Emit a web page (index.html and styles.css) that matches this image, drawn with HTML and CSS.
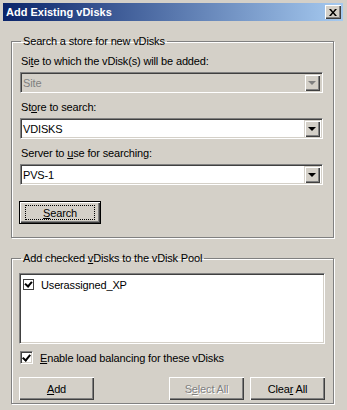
FILE: index.html
```html
<!DOCTYPE html>
<html>
<head>
<meta charset="utf-8">
<link rel="stylesheet" href="styles.css">
</head>
<body>
<div class="window">
  <div class="titlebar">
    <span class="title">Add Existing vDisks</span>
    <span class="close-btn">
      <svg width="8" height="7" viewBox="0 0 8 7"><path d="M0 0h2l2 2.5L6 0h2L5 3.5 8 7H6L4 4.5 2 7H0l3-3.5z" fill="#000"/></svg>
    </span>
  </div>
  <div class="content">
    <fieldset class="group group-search">
      <legend>Search a store for new vDisks</legend>
      <div class="lbl first">Si<u>t</u>e to which the vDisk(s) will be added:</div>
      <div class="combo disabled">
        <span class="val">Site</span>
        <span class="drop"><span class="tri"></span></span>
      </div>
      <div class="lbl">St<u>o</u>re to search:</div>
      <div class="combo">
        <span class="val">VDISKS</span>
        <span class="drop"><span class="tri"></span></span>
      </div>
      <div class="lbl">Server to <u>u</u>se for searching:</div>
      <div class="combo">
        <span class="val">PVS-1</span>
        <span class="drop"><span class="tri"></span></span>
      </div>
      <div class="btn-row">
        <button class="btn default"><span class="focus"><span><u>S</u>earch</span></span></button>
      </div>
    </fieldset>
    <fieldset class="group group-pool">
      <legend>Add checked <u>v</u>Disks to the vDisk Pool</legend>
      <div class="listbox">
        <div class="item"><span class="chk small checked"></span><span>Userassigned_XP</span></div>
      </div>
      <div class="check-row"><span class="chk checked"></span><span><u>E</u>nable load balancing for these vDisks</span></div>
      <div class="actions">
        <button class="btn"><span><u>A</u>dd</span></button>
        <span class="spacer"></span>
        <button class="btn disabled"><span>S<u>e</u>lect All</span></button>
        <button class="btn"><span>Clea<u>r</u> All</span></button>
      </div>
    </fieldset>
  </div>
</div>
</body>
</html>
```

FILE: styles.css
```css
* { box-sizing: border-box; }
html, body { margin: 0; padding: 0; }
body {
  width: 347px;
  height: 410px;
  background: #d4d0c8;
  font-family: "Liberation Sans", Arial, sans-serif;
  font-size: 11px;
  letter-spacing: -0.15px;
  color: #000;
  overflow: hidden;
}
.window {
  width: 347px;
  height: 410px;
  padding: 3px 4px 3px 3px;
  background: #d4d0c8;
  display: flex;
  flex-direction: column;
}
.titlebar {
  height: 18px;
  background: linear-gradient(to right, #0a246a, #a6caf0);
  display: flex;
  align-items: center;
  padding: 0 2px 0 3px;
}
.title {
  flex: 1;
  color: #fff;
  font-weight: bold;
  font-size: 11px;
  letter-spacing: 0;
}
.close-btn {
  width: 16px;
  height: 14px;
  background: #d4d0c8;
  box-shadow: inset 1px 1px 0 #fff, inset -1px -1px 0 #404040, inset -2px -2px 0 #808080;
  display: flex;
  align-items: center;
  justify-content: center;
}
.content {
  flex: 1;
  padding: 14px 9px 0 8px;
  display: flex;
  flex-direction: column;
}
.group {
  margin: 0;
  border: 1px solid #808080;
  box-shadow: inset 1px 1px 0 #fff, 1px 1px 0 #fff;
  padding: 0 8px 0 7px;
  display: flex;
  flex-direction: column;
  flex: none;
}
.group legend {
  padding: 0 2px;
  margin-left: 2px;
  font-size: 11px;
  line-height: 13px;
}
.group-search {
  height: 203px;
}
.group-pool {
  margin-top: 14px;
  height: 152px;
}
.lbl {
  line-height: 13px;
  height: 13px;
  margin-top: 8px;
  padding-left: 2px;
}
.lbl.first { margin-top: 7px; }
.combo {
  margin: 4px 2px 0 1px;
  height: 21px;
  background: #fff;
  border-top: 1px solid #808080;
  border-left: 1px solid #808080;
  border-right: 1px solid #fff;
  border-bottom: 1px solid #fff;
  box-shadow: inset 1px 1px 0 #404040, inset -1px -1px 0 #d4d0c8;
  display: flex;
  align-items: center;
  padding: 2px;
}
.combo .val {
  flex: 1;
}
.combo.disabled { background: #d4d0c8; }
.combo.disabled .val { color: #808080; }
.drop {
  width: 16px;
  height: 17px;
  background: #d4d0c8;
  box-shadow: inset 1px 1px 0 #d4d0c8, inset 2px 2px 0 #fff, inset -1px -1px 0 #404040, inset -2px -2px 0 #808080;
  display: flex;
  align-items: center;
  justify-content: center;
}
.tri {
  width: 0; height: 0;
  border-left: 4px solid transparent;
  border-right: 4px solid transparent;
  border-top: 4px solid #000;
}
.combo.disabled .tri { border-top-color: #808080; }
.btn-row { margin-top: 16px; display: flex; }
.btn {
  font-family: "Liberation Sans", Arial, sans-serif;
  font-size: 11px;
  letter-spacing: -0.15px;
  width: 75px;
  height: 23px;
  padding: 0;
  margin: 0;
  background: #d4d0c8;
  color: #000;
  border: none;
  box-shadow: inset 1px 1px 0 #fff, inset -1px -1px 0 #404040, inset -2px -2px 0 #808080;
  display: flex;
  align-items: center;
  justify-content: center;
  flex: none;
}
.btn.default {
  width: 82px;
  border: 1px solid #000;
}
.btn .focus {
  width: 70px;
  height: 15px;
  border: 1px dotted #000;
  display: flex;
  align-items: center;
  justify-content: center;
}
.btn.disabled { color: #808080; text-shadow: 1px 1px 0 #fff; }
.listbox {
  margin-top: 8px;
  height: 71px;
  background: #fff;
  border-top: 1px solid #808080;
  border-left: 1px solid #808080;
  border-right: 1px solid #fff;
  border-bottom: 1px solid #fff;
  box-shadow: inset 1px 1px 0 #404040, inset -1px -1px 0 #d4d0c8;
  padding: 4px 3px;
}
.item {
  display: flex;
  align-items: center;
  gap: 7px;
  height: 13px;
}
.chk {
  width: 13px;
  height: 13px;
  background: #fff;
  border-top: 1px solid #808080;
  border-left: 1px solid #808080;
  border-right: 1px solid #fff;
  border-bottom: 1px solid #fff;
  box-shadow: inset 1px 1px 0 #404040, inset -1px -1px 0 #d4d0c8;
  position: relative;
  flex: none;
}
.chk.small {
  width: 11px;
  height: 11px;
  border: 1px solid #404040;
  box-shadow: none;
}
.chk.checked::after {
  content: "";
  position: absolute;
  left: 3px;
  top: 1px;
  width: 3px;
  height: 6px;
  border-right: 2px solid #000;
  border-bottom: 2px solid #000;
  transform: rotate(40deg);
}
.chk.small.checked::after {
  left: 2px;
  top: 0px;
  width: 3px;
  height: 5px;
}
.check-row {
  margin-top: 7px;
  height: 13px;
  display: flex;
  align-items: center;
  gap: 7px;
  padding-left: 1px;
}
.actions {
  margin-top: 13px;
  display: flex;
  gap: 6px;
}
.spacer { flex: 1; }
u { text-decoration: underline; text-underline-offset: 1px; }
```
